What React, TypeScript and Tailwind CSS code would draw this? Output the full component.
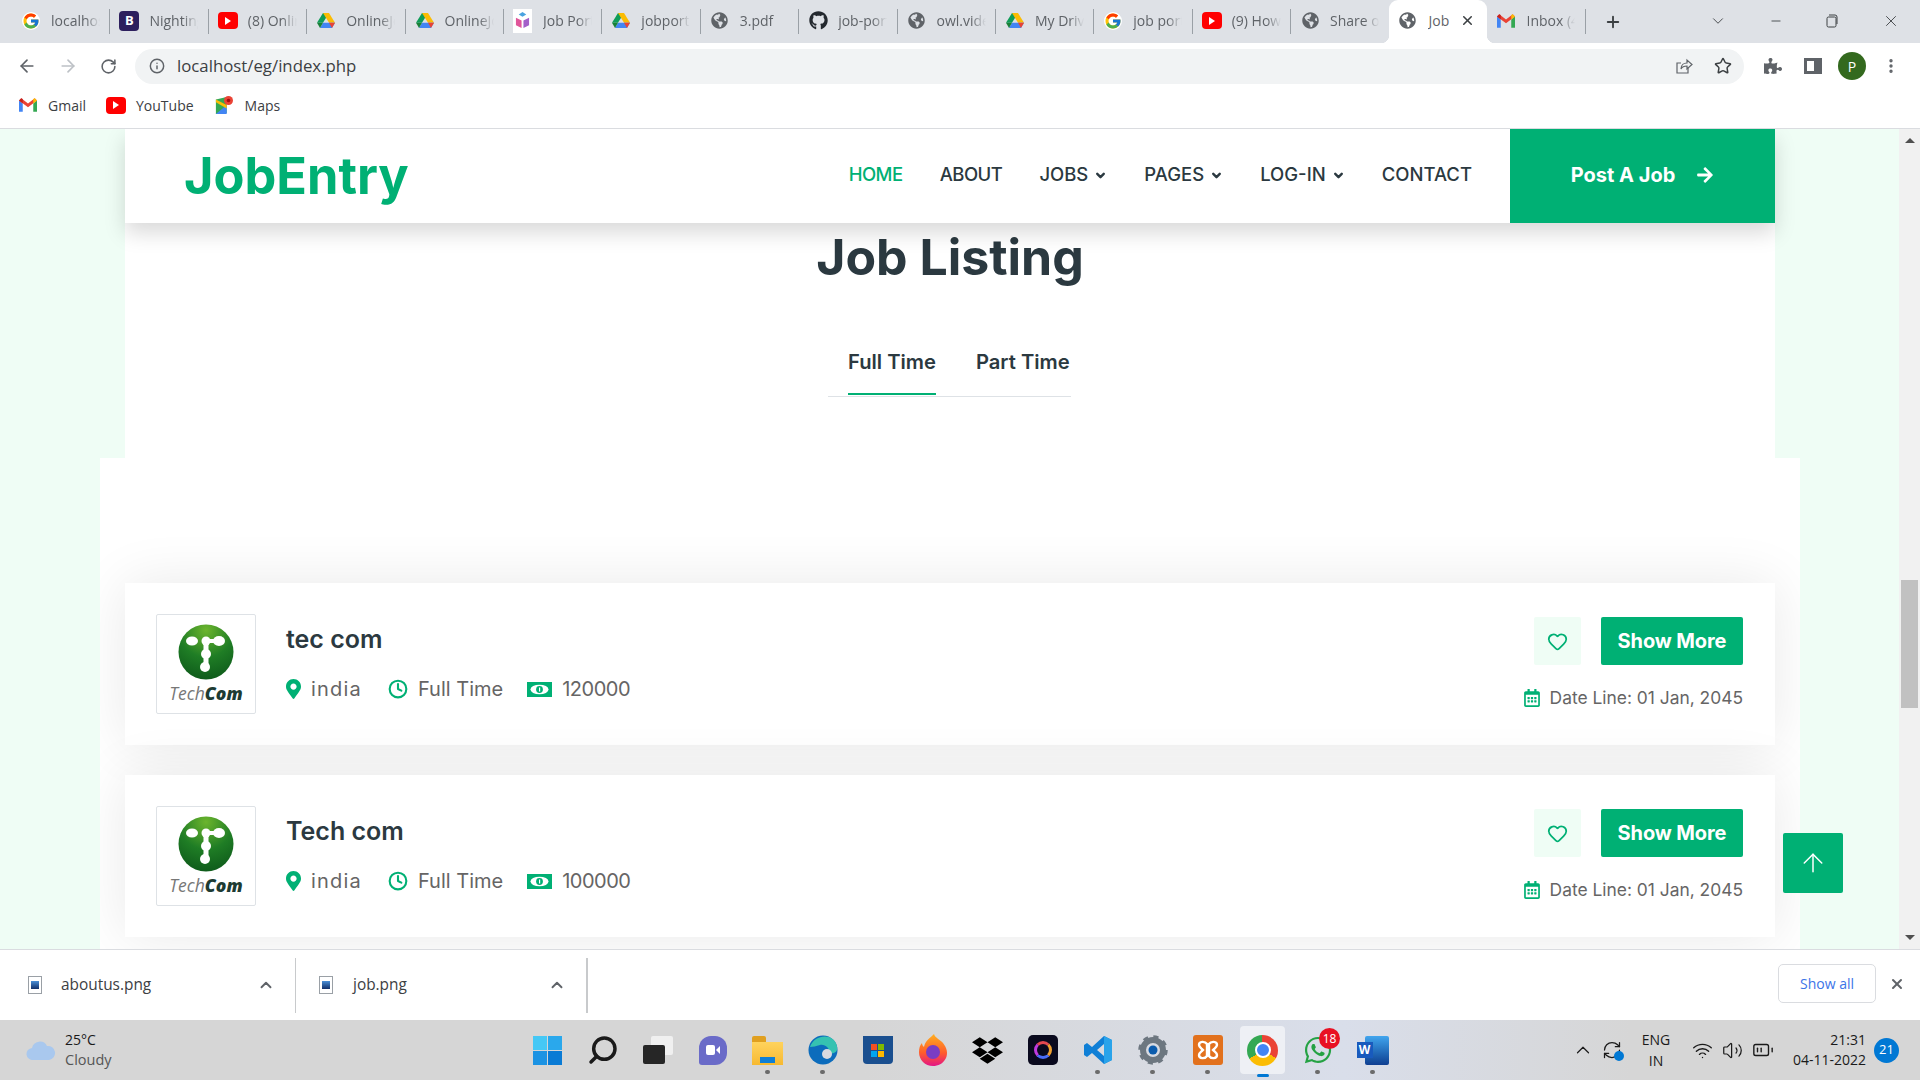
import { ArrowLeft, ArrowRight, ArrowUp, ChevronDown, ChevronUp, Clock, Heart, Info, Minus, Plus, RotateCw, Search, Star, X, EllipsisVertical, Wifi, Volume2, BatteryMedium, RefreshCw } from "lucide-react";
import { FcGoogle } from "react-icons/fc";
import { FaGithub, FaGlobeAmericas, FaDropbox, FaWhatsapp, FaMapMarkerAlt, FaArrowRight, FaPuzzlePiece, FaRegCalendarAlt } from "react-icons/fa";
import type { ReactNode } from "react";

const Drive = () => (
  <svg viewBox="0 0 24 22" className="w-[18px] h-[17px]">
    <path d="M8 1h8l-8 13H0z" fill="#0f9d58" />
    <path d="M8 1h8l8 13h-8z" fill="#fbbc04" />
    <path d="M4 21l4-7h16l-4 7z" fill="#4285f4" />
    <path d="M0 14h8l-4 7z" fill="#188038" />
    <path d="M24 14h-8l4 7z" fill="#ea4335" />
  </svg>
);

const YouTube = () => (
  <span className="w-5 h-[17px] rounded-[4px] bg-[#f00] flex items-center justify-center">
    <span className="w-0 h-0 border-y-[4px] border-y-transparent border-l-[6px] border-l-white" />
  </span>
);

const Gmail = () => (
  <svg viewBox="0 0 24 18" className="w-[18px] h-[14px]">
    <path d="M0 3v15h5V7z" fill="#4285f4" />
    <path d="M24 3v15h-5V7z" fill="#34a853" />
    <path d="M0 3l12 9 12-9-3-3-9 7-9-7z" fill="#ea4335" />
    <path d="M0 3l5 4V1L3 0z" fill="#c5221f" />
    <path d="M24 3l-5 4V1l2-1z" fill="#fbbc04" />
  </svg>
);

const Maps = () => (
  <svg viewBox="0 0 20 22" className="w-[18px] h-5">
    <path d="M1 5l12-3v18l-12 1z" fill="#34a853" />
    <path d="M1 21l12-10v10z" fill="#4285f4" />
    <path d="M1 5l12 6v4L1 8z" fill="#fbbc04" />
    <circle cx="15" cy="6" r="5" fill="#ea4335" />
    <circle cx="15" cy="6" r="2" fill="#a50e0e" />
  </svg>
);

const Globe = () => <FaGlobeAmericas className="w-[17px] h-[17px] text-[#5f6368]" />;

const Cube = () => (
  <span className="w-[19px] h-[24px] bg-white flex items-center justify-center">
    <svg viewBox="0 0 16 18" className="w-[15px] h-[17px]">
      <path d="M8 0l4 2.5-4 2.5-4-2.5z" fill="#4aa3e0" />
      <path d="M1 6l6 3v8l-6-3z" fill="#e0559a" />
      <path d="M15 6l-6 3v8l6-3z" fill="#a45fc9" />
    </svg>
  </span>
);

const Bootstrap = () => (
  <span className="w-5 h-5 rounded-[4px] bg-[#2d1f5e] text-white text-[13px] font-bold flex items-center justify-center">B</span>
);

const tabs: { label: string; icon: ReactNode; active?: boolean }[] = [
  { label: "localhost", icon: <FcGoogle className="w-[18px] h-[18px] bg-white rounded-full" /> },
  { label: "Nightingale", icon: <Bootstrap /> },
  { label: "(8) Online", icon: <YouTube /> },
  { label: "OnlineJob", icon: <Drive /> },
  { label: "OnlineJob", icon: <Drive /> },
  { label: "Job Portal", icon: <Cube /> },
  { label: "jobportal", icon: <Drive /> },
  { label: "3.pdf", icon: <Globe /> },
  { label: "job-portal", icon: <FaGithub className="w-[19px] h-[19px] text-[#24292f]" /> },
  { label: "owl.video", icon: <Globe /> },
  { label: "My Drive", icon: <Drive /> },
  { label: "job portal", icon: <FcGoogle className="w-[18px] h-[18px] bg-white rounded-full" /> },
  { label: "(9) How to", icon: <YouTube /> },
  { label: "Share on", icon: <Globe /> },
  { label: "Job", icon: <Globe />, active: true },
  { label: "Inbox (4)", icon: <Gmail /> },
];

function TabBar() {
  return (
    <div className="h-[43px] bg-[#dee1e6] flex pl-[12px] shrink-0">
      {tabs.map((t, i) =>
        t.active ? (
          <div key={i} className="relative w-[98px] bg-white rounded-t-[9px] flex items-center pl-[10px] pb-[2px] gap-[12px]">
            <span className="absolute bottom-0 -left-2 w-2 h-2 bg-[radial-gradient(circle_at_0_0,#dee1e6_8px,#ffffff_8.5px)]" />
            <span className="absolute bottom-0 -right-2 w-2 h-2 bg-[radial-gradient(circle_at_100%_0,#dee1e6_8px,#ffffff_8.5px)]" />
            {t.icon}
            <span className="text-[14px] text-[#5f6368] w-[24px] overflow-hidden">{t.label}</span>
            <X className="w-[15px] h-[15px] text-[#3c4043] -ml-[4px]" strokeWidth={2.5} />
          </div>
        ) : (
          <div key={i} className="relative w-[98.4px] flex items-center pl-[9px] pb-[2px]">
            <span className="w-5 flex justify-center shrink-0">{t.icon}</span>
            <span className="ml-[10px] w-[49px] overflow-hidden whitespace-nowrap text-[14px] text-[#5f6368] [mask-image:linear-gradient(to_right,black_70%,transparent)]">
              {t.label}
            </span>
            {i !== 13 && <span className="absolute right-0 top-[9px] h-[25px] w-px bg-[#9aa0a6]" />}
          </div>
        ),
      )}
      <Plus className="w-[18px] h-[18px] text-[#3c4043] ml-[18px] self-center" strokeWidth={2.5} />
      <div className="ml-auto flex items-center text-[#3c4043] pb-[2px]">
        <ChevronDown className="w-[18px] h-[18px] mr-[42px]" strokeWidth={1.2} />
        <Minus className="w-[14px] h-[14px] mr-[42px]" strokeWidth={1.5} />
        <svg viewBox="0 0 14 14" className="w-[14px] h-[14px] mr-[43px]" fill="none" stroke="currentColor">
          <rect x="2" y="3" width="9" height="10" rx="1.5" />
          <path d="M4 1h6a2 2 0 0 1 2 2v7" />
        </svg>
        <X className="w-[18px] h-[18px] mr-[20px]" strokeWidth={1.2} />
      </div>
    </div>
  );
}

function Toolbar() {
  return (
    <div className="h-[41px] bg-white flex items-center shrink-0 text-[#5f6368] pt-[5px]">
      <ArrowLeft className="w-[20px] h-[20px] ml-[17px]" strokeWidth={2} />
      <ArrowRight className="w-[20px] h-[20px] ml-[21px] text-[#bdc1c6]" strokeWidth={2} />
      <RotateCw className="w-[17px] h-[17px] ml-[22px]" strokeWidth={2.2} />
      <div className="ml-[18px] w-[1609px] h-[35px] rounded-full bg-[#f1f3f4] flex items-center pl-[14px] shrink-0">
        <Info className="w-[16px] h-[16px]" strokeWidth={2.2} />
        <span className="ml-[12px] text-[16.8px] text-[#3c4043]">localhost/eg/index.php</span>
        <svg viewBox="0 0 18 18" className="w-[18px] h-[18px] ml-auto mr-[21px]" fill="none" stroke="currentColor" strokeWidth="1.2">
          <path d="M13 11v5H2V6h4" />
          <path d="M6 12c0-4 3-6 6-6V3l5 4.5-5 4.5V9c-3 0-5 1-6 3z" />
        </svg>
        <Star className="w-[18px] h-[18px] mr-[12px] text-[#3c4043]" strokeWidth={2} />
      </div>
      <FaPuzzlePiece className="w-[18px] h-[18px] ml-[20px]" />
      <span className="ml-[22px] w-[18px] h-[16px] border-[3px] border-[#5f6368] border-r-[8px]" />
      <span className="ml-[16px] w-[28px] h-[28px] rounded-full bg-[#33691e] text-white text-[14px] flex items-center justify-center">P</span>
      <EllipsisVertical className="w-[18px] h-[18px] ml-[16px]" strokeWidth={2.5} />
    </div>
  );
}

function Bookmarks() {
  return (
    <div className="h-[45px] bg-white border-b border-[#dadce0] flex items-center pl-[19px] pb-[2px] shrink-0 text-[14px] text-[#3c4043]">
      <Gmail />
      <span className="ml-[11px]">Gmail</span>
      <span className="ml-[20px] flex items-center"><YouTube /></span>
      <span className="ml-[10px]">YouTube</span>
      <span className="ml-[21px]"><Maps /></span>
      <span className="ml-[12px]">Maps</span>
    </div>
  );
}

function NavItem({ label, active, caret, tight }: { label: string; active?: boolean; caret?: boolean; tight?: boolean }) {
  return (
    <span className={"flex items-center gap-[6px] text-[18.5px] font-medium " + (active ? "text-[#00b074] " : "text-[#2b3940] ") + (tight ? "tracking-[-0.5px]" : "")}>
      {label}
      {caret && <ChevronDown className="w-[13px] h-[13px]" strokeWidth={4.5} />}
    </span>
  );
}

function TechComLogo() {
  return (
    <div className="w-[100px] h-[100px] border border-[#dee2e6] rounded-[2px] bg-white flex flex-col items-center pt-[9px] shrink-0">
      <svg viewBox="0 0 56 56" className="w-[56px] h-[56px]">
        <defs>
          <radialGradient id="tc" cx="50%" cy="10%" r="90%">
            <stop offset="0%" stopColor="#6cb52d" />
            <stop offset="55%" stopColor="#1f7d25" />
            <stop offset="100%" stopColor="#0f5c1b" />
          </radialGradient>
        </defs>
        <circle cx="28" cy="28" r="27.5" fill="url(#tc)" />
        <g fill="#fff">
          <ellipse cx="14" cy="17" rx="6" ry="4.5" />
          <circle cx="28" cy="17" r="4.5" />
          <ellipse cx="41" cy="17" rx="6" ry="5" />
          <circle cx="28" cy="30" r="5" />
          <circle cx="27" cy="43" r="5" />
          <rect x="25.5" y="15" width="5" height="26" />
          <rect x="26" y="15" width="14" height="4" />
        </g>
      </svg>
      <div className="mt-[3px] text-[17.5px] italic leading-[20px] font-['Open_Sans',sans-serif] text-[#777]">
        Tech<span className="font-extrabold text-[#1d3b33]">Com</span>
      </div>
    </div>
  );
}

function MoneyIcon() {
  return (
    <svg viewBox="0 0 25 15" className="w-[25px] h-[15px] ml-[24px]">
      <rect width="25" height="15" fill="#00b074" />
      <ellipse cx="12.5" cy="7.5" rx="9" ry="4.8" fill="#fff" />
      <circle cx="12.5" cy="7.5" r="3.4" fill="#00b074" />
      <rect x="12" y="5.5" width="1.2" height="4" fill="#fff" />
    </svg>
  );
}

function JobCard({ name, salary }: { name: string; salary: string }) {
  return (
    <div className="h-[162px] bg-white shadow-[0_0_56px_rgba(0,0,0,0.09)] px-[31px] py-[31px] flex">
      <TechComLogo />
      <div className="ml-[30px] pt-[10px]">
        <h5 className="text-[25px] leading-[30px] font-semibold text-[#2b3940]">{name}</h5>
        <div className="mt-[20px] flex items-center text-[20px] leading-[30px] text-[#666565]">
          <FaMapMarkerAlt className="w-[15px] h-[20px] text-[#00b074]" />
          <span className="ml-[10px] tracking-[1.2px]">india</span>
          <Clock className="w-[20px] h-[20px] ml-[26px] text-[#00b074]" strokeWidth={2.5} />
          <span className="ml-[10px]">Full Time</span>
          <MoneyIcon />
          <span className="ml-[10px] tracking-[-0.5px]">{salary}</span>
        </div>
      </div>
      <div className="ml-auto flex flex-col items-end pr-[1px] pt-[3px]">
        <div className="flex gap-[20px]">
          <span className="w-[47px] h-[48px] rounded-[2px] bg-[#effdf5] flex items-center justify-center">
            <Heart className="w-[21px] h-[21px] text-[#00b074]" strokeWidth={2} />
          </span>
          <span className="w-[142px] h-[48px] rounded-[2px] bg-[#00b074] text-white text-[20px] font-bold tracking-[-0.1px] flex items-center justify-center">
            Show More
          </span>
        </div>
        <div className="mt-[18px] flex items-center text-[17.4px] leading-[30px] text-[#666565]">
          <FaRegCalendarAlt className="w-[16px] h-[18px] text-[#00b074]" />
          <span className="ml-[10px]">Date Line: 01 Jan, 2045</span>
        </div>
      </div>
    </div>
  );
}

function Page() {
  return (
    <div className="flex-1 min-h-0 flex bg-[#effdf5]">
      <div className="relative flex-1 overflow-hidden">
        <div className="relative z-10 w-[1650px] ml-[125px] h-[94px] bg-white shadow-[0_10px_20px_rgba(0,0,0,0.15)] flex items-center">
          <span className="ml-[59px] text-[50.5px] font-bold text-[#00b074] leading-none">JobEntry</span>
          <nav className="ml-auto flex items-center gap-[37px] pb-[2px]">
            <NavItem label="HOME" active tight />
            <NavItem label="ABOUT" tight />
            <NavItem label="JOBS" caret />
            <NavItem label="PAGES" caret />
            <NavItem label="LOG-IN" caret />
            <NavItem label="CONTACT" />
          </nav>
          <span className="ml-[38px] w-[265px] h-full bg-[#00b074] text-white text-[20px] font-bold flex items-center justify-center gap-[21px] pb-[2px]">
            Post A Job
            <FaArrowRight className="w-[18px] h-[18px]" />
          </span>
        </div>
        <div className="w-[1650px] ml-[125px] h-[235px] bg-white flex flex-col items-center pt-[4px]">
          <h1 className="text-[50px] leading-[60px] font-bold text-[#2b3940]">Job Listing</h1>
          <div className="mt-[58px] ml-[-1px] w-[243px] h-[52px] border-b border-[#dee2e6] flex pl-[20px] gap-[40px] text-[20.2px] font-semibold text-[#2b3940]">
            <span className="h-[50px] pt-[2px] border-b-[2px] border-[#00b074]">Full Time</span>
            <span className="pt-[2px]">Part Time</span>
          </div>
        </div>
        <div className="w-[1700px] ml-[100px] h-[600px] bg-white overflow-hidden px-[25px] pt-[125px] flex flex-col gap-[30px]">
          <JobCard name="tec com" salary="120000" />
          <JobCard name="Tech com" salary="100000" />
        </div>
        <span className="absolute z-20 left-[1783px] top-[704px] w-[60px] h-[60px] rounded-[2px] bg-[#00b074] flex items-center justify-center">
          <ArrowUp className="w-[30px] h-[30px] text-white" strokeWidth={1.2} />
        </span>
      </div>
      <div className="w-[21px] bg-[#f1f1f1] flex flex-col items-center">
        <span className="mt-[9px] w-0 h-0 border-x-[5px] border-x-transparent border-b-[5px] border-b-[#505050]" />
        <span className="mt-[437px] w-[17px] h-[128px] bg-[#c1c1c1]" />
        <span className="mt-auto mb-[9px] w-0 h-0 border-x-[5px] border-x-transparent border-t-[5px] border-t-[#505050]" />
      </div>
    </div>
  );
}

function FileIcon() {
  return (
    <span className="w-[14px] h-[18px] border border-[#9aa0a6] bg-white flex items-center justify-center">
      <span className="w-[8px] h-[8px] bg-gradient-to-b from-[#4a90d9] to-[#12306b]" />
    </span>
  );
}

function DownloadBar() {
  return (
    <div className="h-[71px] bg-white border-t border-[#dadce0] flex items-center shrink-0 text-[#3c4043]">
      <div className="w-[296px] h-[55px] border-r border-[#c8cacc] flex items-center pl-[28px]">
        <FileIcon />
        <span className="ml-[19px] text-[15.4px]">aboutus.png</span>
        <ChevronUp className="w-[18px] h-[18px] ml-auto mr-[20px] text-[#5f6368]" strokeWidth={2.5} />
      </div>
      <div className="w-[292px] h-[55px] border-r-2 border-[#c8cacc] flex items-center pl-[23px]">
        <FileIcon />
        <span className="ml-[20px] text-[15.4px]">job.png</span>
        <ChevronUp className="w-[18px] h-[18px] ml-auto mr-[20px] text-[#5f6368]" strokeWidth={2.5} />
      </div>
      <span className="ml-auto mb-[3px] w-[98px] h-[39px] rounded-[5px] border border-[#dadce0] text-[#3b74e8] text-[14px] flex items-center justify-center">
        Show all
      </span>
      <X className="w-[16px] h-[16px] ml-[13px] mr-[15px] mb-[3px] text-[#5f6368]" strokeWidth={3} />
    </div>
  );
}

const Dot = ({ on }: { on?: boolean }) => (
  <span className={on ? "absolute bottom-[3px] w-[12px] h-[3px] rounded-full bg-[#0078d4]" : "absolute bottom-[6px] w-[5px] h-[4px] rounded-full bg-[#6b6b6b]"} />
);

const taskIcons: { icon: ReactNode; dot?: boolean; on?: boolean; badge?: string }[] = [
  {
    icon: (
      <span className="grid grid-cols-2 gap-[1px] w-[29px] h-[29px]">
        <span className="bg-[#45c8f5]" /><span className="bg-[#2aa8ec]" /><span className="bg-[#1c93e3]" /><span className="bg-[#0a7bd5]" />
      </span>
    ),
  },
  { icon: <Search className="w-[32px] h-[32px] text-[#1a1a1a] -scale-x-100" strokeWidth={2.6} /> },
  {
    icon: (
      <span className="relative w-[30px] h-[28px]">
        <span className="absolute right-0 top-0 w-[22px] h-[19px] rounded-[2px] bg-[#f0f0f0]" />
        <span className="absolute left-0 bottom-0 w-[22px] h-[19px] rounded-[2px] bg-[#262626]" />
      </span>
    ),
  },
  {
    icon: (
      <span className="w-[28px] h-[29px] rounded-[12px] rounded-bl-[3px] bg-[#6a6bc8] flex items-center justify-center">
        <span className="w-[9px] h-[10px] rounded-[2px] bg-white" />
        <span className="w-0 h-0 ml-[1px] border-y-[4px] border-y-transparent border-r-[4px] border-r-white" />
      </span>
    ),
  },
  {
    dot: true,
    icon: (
      <span className="w-[31px] h-[29px] flex flex-col">
        <span className="w-[14px] h-[6px] bg-[#e0a020] rounded-t-[2px]" />
        <span className="flex-1 bg-gradient-to-b from-[#ffd35c] to-[#f7b92f] flex items-end justify-center">
          <span className="w-[15px] h-[6px] bg-[#0f7fd6] mb-[2px]" />
        </span>
      </span>
    ),
  },
  {
    dot: true,
    icon: (
      <svg viewBox="0 0 30 30" className="w-[30px] h-[30px]">
        <circle cx="15" cy="15" r="14.5" fill="#0c6cbc" />
        <path d="M2 12C5 3 14 0 21 2c6 2 9 8 8 13-1 3-5 4-8 3 1-5-4-9-9-8-4 1-7 2-10 2z" fill="#35c2b1" />
        <circle cx="19" cy="19" r="5" fill="#d8dae0" />
      </svg>
    ),
  },
  {
    icon: (
      <span className="w-[30px] h-[28px] rounded-b-[4px] bg-[#1a4f8f] grid grid-cols-[6px_6px] grid-rows-[6px_6px] gap-[1px] place-content-center">
        <span className="bg-[#f25022]" /><span className="bg-[#7fba00]" />
        <span className="bg-[#00a4ef]" /><span className="bg-[#ffb900]" />
      </span>
    ),
  },
  {
    icon: (
      <svg viewBox="0 0 30 32" className="w-[30px] h-[32px]">
        <defs>
          <linearGradient id="ff" x1="0" y1="0" x2="0" y2="1">
            <stop offset="0%" stopColor="#ffb01f" />
            <stop offset="60%" stopColor="#ff5a2c" />
            <stop offset="100%" stopColor="#e31587" />
          </linearGradient>
        </defs>
        <path d="M16 0c1 4 7 6 9 9 4 5 5 10 3 15-3 6-8 8-13 8-8 0-14-6-14-14 0-4 1-7 3-9 0 2 1 3 2 4 1-6 6-9 10-13z" fill="url(#ff)" />
        <circle cx="15" cy="18" r="7" fill="#7a3dc4" />
      </svg>
    ),
  },
  { icon: <FaDropbox className="w-[31px] h-[31px] text-black" /> },
  {
    icon: (
      <span className="w-[30px] h-[30px] rounded-[5px] bg-[#0a0a1e] flex items-center justify-center">
        <span className="w-[18px] h-[18px] rounded-full border-[3px] border-t-[#e34850] border-r-[#f0a030] border-b-[#4a6cf7] border-l-[#c03adf]" />
      </span>
    ),
  },
  {
    dot: true,
    icon: (
      <svg viewBox="0 0 30 30" className="w-[30px] h-[30px]">
        <path d="M21 1l8 4v20l-8 4L9 18l-5 4-3-2V10l3-2 5 4zM21 9l-7 6 7 6z" fill="#0f7fd6" />
        <path d="M21 1l8 4v20l-8 4z" fill="#29a3ea" />
      </svg>
    ),
  },
  {
    dot: true,
    icon: (
      <svg viewBox="0 0 30 30" className="w-[30px] h-[30px]">
        <circle cx="15" cy="15" r="10" fill="none" stroke="#6d7780" strokeWidth="6" />
        <circle cx="15" cy="15" r="4.5" fill="#0b5cad" />
        <circle cx="15" cy="15" r="13" fill="none" stroke="#6d7780" strokeWidth="3.5" strokeDasharray="5 5.2" />
      </svg>
    ),
  },
  {
    dot: true,
    icon: (
      <svg viewBox="0 0 30 30" className="w-[30px] h-[30px]">
        <rect width="30" height="30" rx="3" fill="#e2711d" />
        <path d="M14 9c-2-3-8-3-8 1 0 2 2 3 4 5-2 2-4 3-4 5 0 4 6 4 8 1zM16 9c2-3 8-3 8 1 0 2-2 3-4 5 2 2 4 3 4 5 0 4-6 4-8 1z" fill="none" stroke="#fff" strokeWidth="2.4" />
      </svg>
    ),
  },
  {
    on: true,
    icon: (
      <span className="w-[31px] h-[31px] rounded-full bg-[conic-gradient(#ea4335_0_33%,#fbbc04_33%_66%,#34a853_66%_100%)] flex items-center justify-center">
        <span className="w-[16px] h-[16px] rounded-full bg-[#4285f4] border-[2px] border-white" />
      </span>
    ),
  },
  { dot: true, badge: "18", icon: <FaWhatsapp className="w-[30px] h-[30px] text-[#25a244]" /> },
  {
    dot: true,
    icon: (
      <span className="relative w-[32px] h-[29px] flex justify-end">
        <span className="w-[24px] h-full rounded-[2px] bg-gradient-to-b from-[#41a5ee] to-[#103f91]" />
        <span className="absolute left-0 top-[6px] w-[16px] h-[16px] bg-[#185abd] text-white text-[12px] font-bold flex items-center justify-center">W</span>
      </span>
    ),
  },
];

function Taskbar() {
  return (
    <div className="h-[60px] bg-[linear-gradient(to_right,#d6d6d6_0%,#d6d6d6_45%,#d9deea_70%,#d6d6d6_85%)] flex items-center shrink-0 text-[#1a1a1a] font-['Open_Sans',sans-serif]">
      <div className="w-[520px] flex items-center pl-[26px]">
        <svg viewBox="0 0 30 20" className="w-[30px] h-[20px]">
          <path d="M7 20a6 6 0 0 1-1-12 8 8 0 0 1 15-2 6 6 0 0 1 2 14z" fill="#a9c8ee" />
        </svg>
        <div className="ml-[9px] text-[14px] leading-[20px]">
          <div>25°C</div>
          <div className="text-[#555] text-[14.5px]">Cloudy</div>
        </div>
      </div>
      <div className="flex">
        {taskIcons.map((t, i) => (
          <div key={i} className="relative w-[55px] h-[60px] flex items-center justify-center">
            {t.on && <span className="absolute left-[5px] right-[5px] top-[6px] bottom-[6px] rounded-[4px] bg-[#eef0f5]" />}
            <span className="relative flex">{t.icon}</span>
            {t.badge && (
              <span className="absolute top-[8px] right-[5px] w-[21px] h-[21px] rounded-full bg-[#e81123] text-white text-[12px] flex items-center justify-center">
                {t.badge}
              </span>
            )}
            {t.dot && <Dot />}
            {t.on && <Dot on />}
          </div>
        ))}
      </div>
      <div className="ml-auto flex items-center pr-[21px]">
        <ChevronUp className="w-[22px] h-[22px]" strokeWidth={1.3} />
        <span className="relative ml-[8px]">
          <RefreshCw className="w-[20px] h-[20px]" strokeWidth={1.5} />
          <span className="absolute right-[-2px] bottom-[-1px] w-[10px] h-[10px] rounded-full bg-[#0078d4]" />
        </span>
        <div className="ml-[18px] w-[32px] text-center text-[14px] leading-[21px]">
          <div>ENG</div>
          <div>IN</div>
        </div>
        <Wifi className="w-[21px] h-[21px] ml-[20px]" strokeWidth={1.6} />
        <Volume2 className="w-[21px] h-[21px] ml-[9px]" strokeWidth={1.4} />
        <BatteryMedium className="w-[22px] h-[22px] ml-[9px]" strokeWidth={1.5} />
        <div className="w-[92px] text-right text-[14px] leading-[20px]">
          <div>21:31</div>
          <div>04-11-2022</div>
        </div>
        <span className="ml-[8px] w-[25px] h-[25px] rounded-full bg-[#0078d4] text-white text-[13px] flex items-center justify-center">21</span>
      </div>
    </div>
  );
}

export default function App() {
  return (
    <div className="h-screen flex flex-col overflow-hidden font-['Inter',sans-serif]">
      <div className="font-['Open_Sans',sans-serif] shrink-0">
        <TabBar />
        <Toolbar />
        <Bookmarks />
      </div>
      <Page />
      <div className="font-['Open_Sans',sans-serif] shrink-0">
        <DownloadBar />
      </div>
      <Taskbar />
    </div>
  );
}
